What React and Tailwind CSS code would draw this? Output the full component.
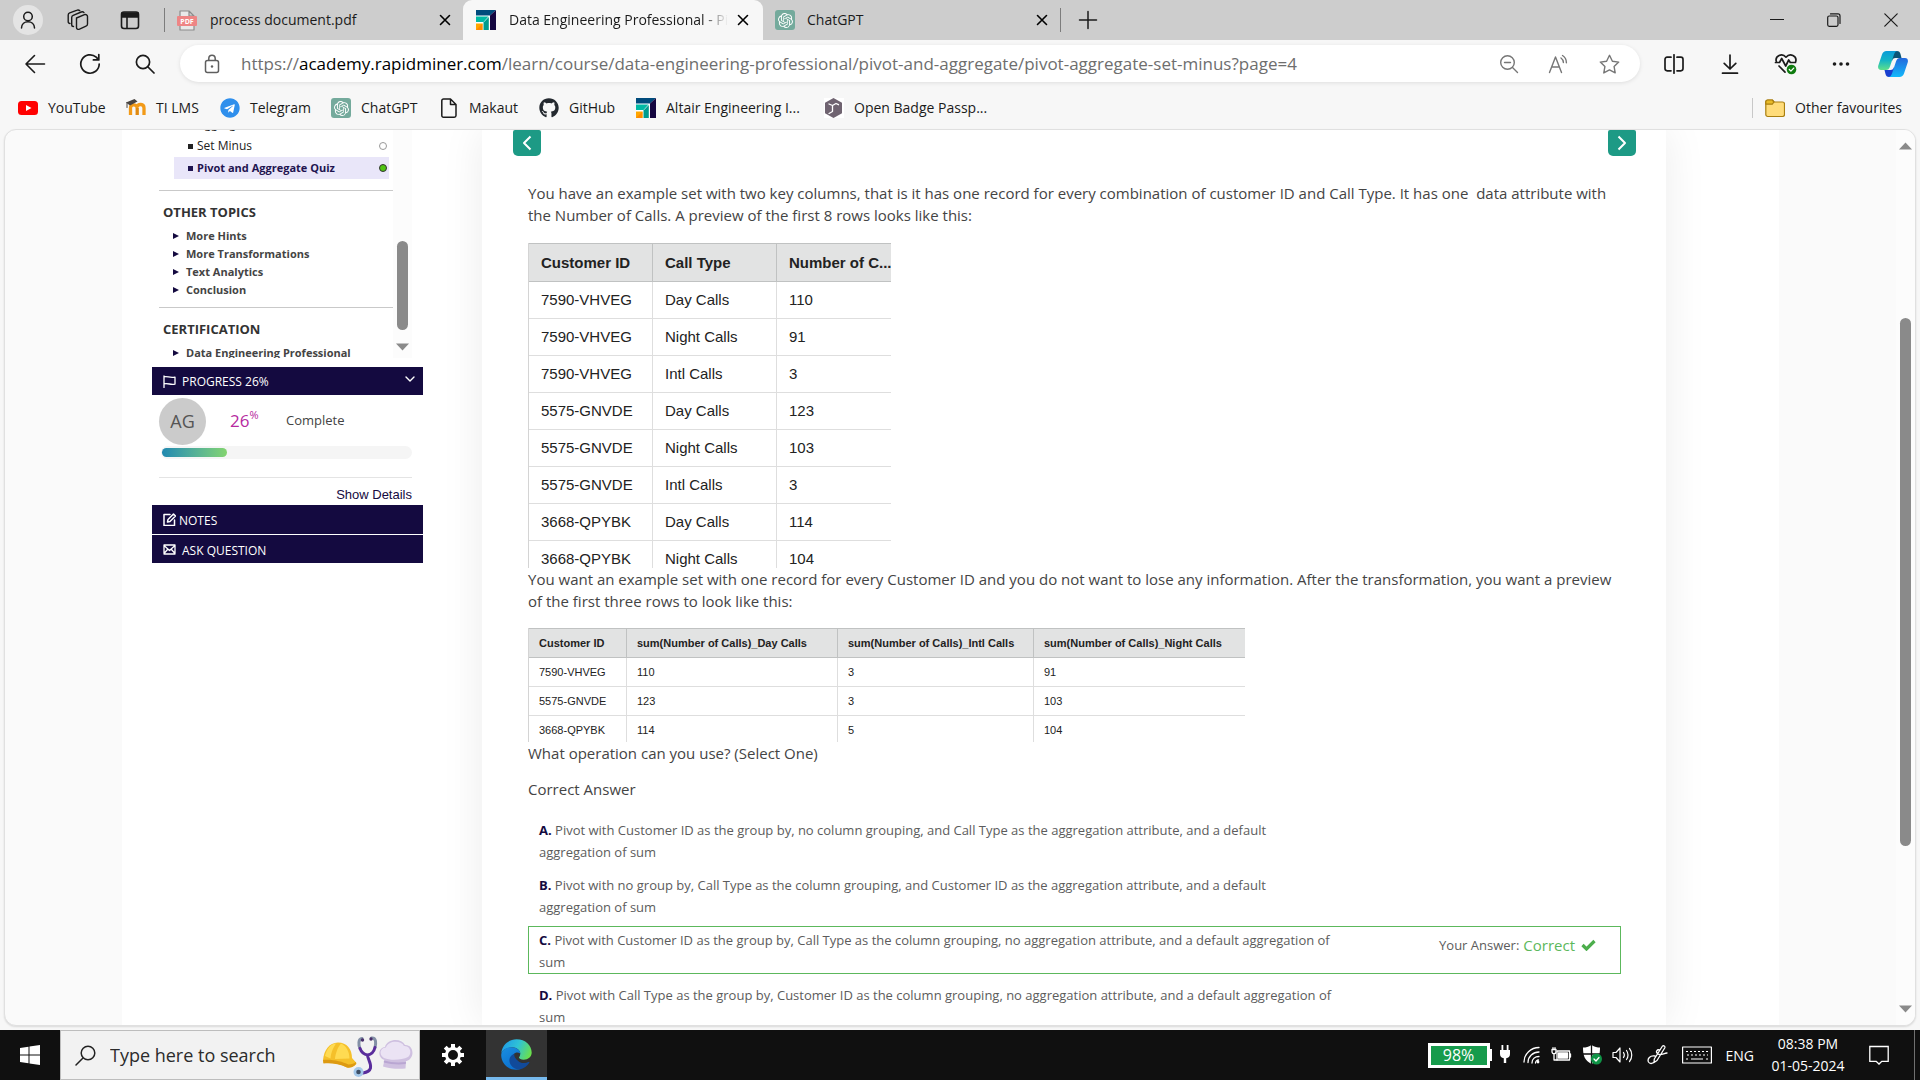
import React from "react";
import { FaGithub, FaTelegram } from "react-icons/fa";
import { SiOpenai } from "react-icons/si";

const UI = 'font-["Open_Sans","Noto_Sans",sans-serif]';

function Svg({ w = 20, h = 20, box, className = "", sw = 1.4, children }) {
  return (
    <svg
      width={w}
      height={h}
      viewBox={box || `0 0 ${w} ${h}`}
      fill="none"
      stroke="currentColor"
      strokeWidth={sw}
      strokeLinecap="round"
      strokeLinejoin="round"
      className={`shrink-0 ${className}`}
      aria-hidden="true"
    >
      {children}
    </svg>
  );
}

function AltairIcon() {
  return (
    <Svg className="" sw={0}>
      <rect width="20" height="20" fill="#fff" />
      <path d="M0 0h20l-6 5.500H0z" fill="#004b7c" />
      <path d="M20 0v20h-6V5.500z" fill="#140640" />
      <path d="M0 6.500h12.500l-5 5.500H0z" fill="#00b9a4" />
      <path d="M12.800 7v13H7.500v-7.500z" fill="#009b8c" />
      <path d="M0 13.500h6.500V20H0z" fill="#ffa600" />
      <path d="M6.500 13.500V20H0z" fill="#ff8a00" />
    </Svg>
  );
}

function ChatGptIcon() {
  return (
    <span className="flex size-5 shrink-0 items-center justify-center rounded-[3px] bg-[#74aa9c] text-white">
      <SiOpenai size={15} />
    </span>
  );
}

function PdfIcon() {
  return (
    <Svg w={20} h={21} sw={1.2}>
      <path d="M3 8V1h9l5 5v2M3 15v5h14v-5M12 1v5h5" fill="#e9e9e9" stroke="#8b8b8b" />
      <rect x="0" y="6" width="20" height="10" rx="1" fill="#ee8585" stroke="none" />
      <text x="10" y="13.500" textAnchor="middle" fontSize="7" fontWeight="700" fill="#fff" stroke="none" fontFamily="Open Sans">PDF</text>
    </Svg>
  );
}

function CloseX({ label = "Close tab" }) {
  return (
    <button type="button" aria-label={label} className="flex size-5 shrink-0 items-center justify-center text-black">
      <Svg w={12} h={12} sw={1.6}><path d="M1.500 1.500l9 9M10.500 1.500l-9 9" /></Svg>
    </button>
  );
}

function TabStrip() {
  return (
    <header className="flex h-10 shrink-0 items-center bg-[#cdcdcd] text-[14px] leading-5 text-[#1b1b1b]">
      <div className="flex w-[164px] shrink-0 items-center">
        <button type="button" aria-label="Profile" className="ml-[13px] flex size-[30px] items-center justify-center rounded-full bg-[#e4e4e4]">
          <Svg w={16} h={18} sw={1.5}><circle cx="8" cy="5.500" r="4.300" /><path d="M1.500 17c0-8.500 13-8.500 13 0" /></Svg>
        </button>
        <button type="button" aria-label="Workspaces" className="ml-6 flex size-[22px] items-center justify-center">
          <Svg w={22} h={22} sw={1.4}>
            <path d="M9.500 9l8-3.300c1.500-.6 3 .2 3 1.800v7.500c0 1-.5 1.800-1.500 2.200l-6.500 3c-1.500.6-3-.2-3-1.800z" />
            <path d="M6.500 17.500c-1 0-1.800-.8-1.800-1.800V8.500c0-1 .5-1.800 1.500-2.200l8-3.300c1.200-.5 2.300 0 2.800.6" />
            <path d="M3 14.500c-1 0-1.800-.8-1.800-1.800V6c0-1 .5-1.800 1.500-2.200l7.500-2.600c1.200-.5 2 0 2.500.4" />
          </Svg>
        </button>
        <button type="button" aria-label="Tab actions" className="ml-[31px] flex size-5 items-center justify-center">
          <Svg w={20} h={20} sw={1.600}>
            <rect x="1.500" y="2" width="17" height="16.500" rx="2.500" /><path d="M7 6v12" /><path d="M2 3h16v4H2z" fill="currentColor" />
          </Svg>
        </button>
      </div>
      <nav aria-label="Tabs" className="flex h-10 items-center">
        <div className="flex h-10 w-[299px] items-center">
          <div className="h-6 w-px bg-[#7c7c7c]" />
          <a href="#pdf" className="flex flex-1 items-center pl-3"><PdfIcon /><span className="ml-[13px]">process document.pdf</span></a>
          <CloseX />
          <span className="w-2" />
        </div>
        <div className="flex h-10 w-[300px] items-center rounded-t-[9px] bg-[#f7f7f7] pr-[10px] pl-[13px]">
          <a href="#course" className="flex min-w-0 flex-1 items-center">
            <AltairIcon />
            <span className="ml-[13px] w-[219px] overflow-hidden whitespace-nowrap [mask-image:linear-gradient(to_right,black_88%,transparent_100%)]">Data Engineering Professional - Pivot</span>
          </a>
          <CloseX />
        </div>
        <div className="flex h-10 w-[298px] items-center pl-3">
          <a href="#chatgpt" className="flex flex-1 items-center"><ChatGptIcon /><span className="ml-3">ChatGPT</span></a>
          <CloseX />
          <span className="w-2" />
          <div className="h-6 w-px bg-[#7c7c7c]" />
        </div>
        <button type="button" aria-label="New tab" className="ml-[17px] flex size-5 items-center justify-center">
          <Svg sw={1.5}><path d="M10 1.500v17M1.500 10h17" /></Svg>
        </button>
      </nav>
      <div className="ml-auto flex h-10 shrink-0 items-center gap-[37px] pr-[19px]">
        <button type="button" aria-label="Minimize" className="flex size-5 items-center justify-center"><Svg w={14} h={14} sw={1.2}><path d="M.5 6.500h13" /></Svg></button>
        <button type="button" aria-label="Restore" className="flex size-5 items-center justify-center">
          <Svg w={14} h={14} sw={1.2}><rect x=".7" y="3" width="10.300" height="10.300" rx="1.500" /><path d="M3.500.9h7.500c1.200 0 2 .8 2 2v7.600" /></Svg>
        </button>
        <button type="button" aria-label="Close window" className="flex size-5 items-center justify-center"><Svg w={14} h={14} sw={1.200}><path d="M.8.8l12.400 12.400M13.200.8L.8 13.200" /></Svg></button>
      </div>
    </header>
  );
}

function ToolButton({ label, children, className = "" }) {
  return (
    <button type="button" aria-label={label} className={`flex size-6 shrink-0 items-center justify-center ${className}`}>
      {children}
    </button>
  );
}

function Toolbar() {
  return (
    <div className="flex h-[47px] shrink-0 items-center pr-3 text-[#1b1b1b]">
      <div className="flex w-[180px] shrink-0 items-center gap-[31px] pl-[23px]">
        <ToolButton label="Back"><Svg w={22} h={20} sw={1.600}><path d="M20.500 10H2M10.500 1.500L2 10l8.500 8.500" /></Svg></ToolButton>
        <ToolButton label="Refresh"><Svg w={22} h={22} sw={1.700}><path d="M20.200 11a9.200 9.200 0 1 1-3-6.800l2.500 2.600M19.800 1.500v5.400h-5.400" /></Svg></ToolButton>
        <ToolButton label="Search"><Svg w={20} h={20} sw={1.700}><circle cx="8" cy="8" r="6.600" /><path d="M13 13l6 6" /></Svg></ToolButton>
      </div>
      <div className="flex h-[37px] min-w-0 flex-1 items-center rounded-full bg-white pr-[19px] pl-[22px] shadow-[0_1px_4px_rgba(0,0,0,0.10)]">
        <button type="button" aria-label="Site information" className="text-[#5f5f5f]">
          <Svg w={20} h={20} sw={1.500}><rect x="3.500" y="6.500" width="13" height="12" rx="2" /><path d="M6.800 6.300V4.600c0-4.600 6.400-4.600 6.400 0v1.700" /><circle cx="10" cy="12.500" r="1.200" fill="currentColor" stroke="none" /></Svg>
        </button>
        <div role="textbox" aria-label="Address" tabIndex={0} className="ml-[19px] min-w-0 flex-1 overflow-hidden text-[17px] leading-6 whitespace-nowrap text-[#6e6e6e]">
          https://<span className="text-black">academy.rapidminer.com</span>/learn/course/data-engineering-professional/pivot-and-aggregate/pivot-aggregate-set-minus?page=4
        </div>
        <div className="flex items-center gap-[26px] text-[#767676]">
          <ToolButton label="Zoom out"><Svg w={20} h={20} sw={1.400}><circle cx="8.500" cy="8.500" r="6.800" /><path d="M5.500 8.500h6M13.500 13.500l5 5" /></Svg></ToolButton>
          <ToolButton label="Read aloud"><Svg w={22} h={20} sw={1.400}><path d="M1.500 18.500L7.500 3l6 15.500M3.700 13h7.600M13 4c1.500 1 2.300 2.500 2.400 4.500M14.500 1.500c2.600 1.600 3.900 4.200 3.900 7.200" /></Svg></ToolButton>
          <ToolButton label="Add to favourites"><Svg w={21} h={20} sw={1.400}><path d="M10.500 1.300l2.900 5.900 6.300.9-4.600 4.500 1.100 6.300-5.700-3-5.700 3 1.100-6.300L1.300 8.100l6.300-.9z" /></Svg></ToolButton>
        </div>
      </div>
      <div className="ml-[22px] flex shrink-0 items-center">
        <ToolButton label="Split screen"><Svg w={20} h={20} sw={1.700}><path d="M10 .8v18.400M7 3.200H3.200c-1.300 0-2.200.9-2.200 2.200v9.200c0 1.300.9 2.200 2.200 2.200H7M13 3.200h3.800c1.300 0 2.200.9 2.200 2.200v9.200c0 1.300-.9 2.200-2.200 2.200H13" /></Svg></ToolButton>
        <ToolButton label="Downloads" className="ml-8"><Svg w={18} h={20} sw={1.700}><path d="M9 1v14M3.200 9.300L9 15l5.800-5.700M1.500 19.200h15" /></Svg></ToolButton>
        <ToolButton label="Browser essentials" className="ml-8">
          <Svg w={24} h={22} sw={1.700}>
            <path d="M2.300 8.500C.8 3 8-.8 12 4.200c4-5 11.200-1.200 9.700 4.300M1.500 9.500h4l2.200-4 4 7.500 3-6 1.600 2.500h5.200M5 13l6 6.200" />
            <circle cx="17.500" cy="16.500" r="4.800" fill="#107c10" stroke="none" /><path d="M15.300 16.500l1.600 1.600 2.800-3" stroke="#fff" strokeWidth="1.300" />
          </Svg>
        </ToolButton>
        <ToolButton label="Settings and more" className="ml-[31px]"><Svg w={18} h={6} sw={0}><g fill="currentColor"><circle cx="2.500" cy="3" r="1.800" /><circle cx="9" cy="3" r="1.800" /><circle cx="15.500" cy="3" r="1.800" /></g></Svg></ToolButton>
        <button type="button" aria-label="Copilot" className="ml-[25px]">
          <Svg w={30} h={28} sw={0}>
            <defs>
              <linearGradient id="cpa" x1="0" y1="0" x2="0" y2="1"><stop offset="0" stopColor="#0a9bd8" /><stop offset=".5" stopColor="#15b5c5" /><stop offset="1" stopColor="#5fe08a" /></linearGradient>
              <linearGradient id="cpb" x1="0" y1="0" x2="0" y2="1"><stop offset="0" stopColor="#2468dc" /><stop offset="1" stopColor="#13b9fb" /></linearGradient>
            </defs>
            <path d="M12 1h7c2 0 3 1.200 3.500 3l1 4h-6c-2 0-3 1-3.500 3z" fill="#0b5577" />
            <path d="M18 27h-7c-2 0-3-1.200-3.500-3l-1-4h6c2 0 3-1 3.500-3z" fill="#1a3fd0" />
            <path d="M8.500 1H20c-2 0-3.200 1-4 3.500l-4 12c-.8 2.400-2 3.500-4 3.500H3C.5 20-.4 18 .3 15.500L4 4.500C4.800 2.200 6.200 1 8.500 1z" fill="url(#cpa)" />
            <path d="M21.500 27H10c2 0 3.200-1 4-3.500l4-12C18.800 9 20 8 22 8h5c2.500 0 3.400 2 2.700 4.500L26 23.500c-.8 2.300-2.200 3.500-4.500 3.500z" fill="url(#cpb)" />
          </Svg>
        </button>
      </div>
    </div>
  );
}

const bookmarks = [
  {
    name: "YouTube", width: "w-[108px]",
    icon: <Svg sw={0}><rect x="0" y="3" width="20" height="14" rx="3.500" fill="#f00" /><path d="M8 7l5.500 3L8 13z" fill="#fff" /></Svg>,
  },
  {
    name: "TI LMS", width: "w-[94px]",
    icon: (
      <Svg sw={0}>
        <path d="M4.500 17V10c0-4 5-4 6.500-1 1-3.500 7-3.500 7 1v7" fill="none" stroke="#f29a18" strokeWidth="3.300" strokeLinecap="butt" />
        <path d="M11.200 17v-7" stroke="#e08a10" strokeWidth="3.300" strokeLinecap="butt" />
        <path d="M0 4.500L8.500 1l3 2.500L4 7.500z" fill="#4a4541" /><path d="M1 4.500v5" stroke="#4a4541" strokeWidth="1" />
      </Svg>
    ),
  },
  { name: "Telegram", width: "w-[111px]", icon: <span className="rounded-full bg-white"><FaTelegram size={20} color="#2f8fec" /></span> },
  { name: "ChatGPT", width: "w-[108px]", icon: <ChatGptIcon /> },
  { name: "Makaut", width: "w-[100px]", icon: <Svg sw={1.500}><path d="M4.500 1h7l5.500 5.500v11c0 1-.6 1.700-1.700 1.700H4.500c-1 0-1.700-.7-1.700-1.700V2.700C2.800 1.700 3.500 1 4.500 1zM11.500 1v5.500H17" /></Svg> },
  { name: "GitHub", width: "w-[97px]", icon: <FaGithub size={20} color="#24292f" /> },
  { name: "Altair Engineering I...", width: "w-[188px]", icon: <AltairIcon /> },
  {
    name: "Open Badge Passp...", width: "w-[170px]",
    icon: (
      <Svg sw={0}>
        <rect width="20" height="20" fill="#fff" />
        <path d="M9.500 0l8.500 4.800v10.400L9.500 20 1 15.200V4.800z" fill="#6f6370" />
        <path d="M5 15.500l3.500-2V7.500L5 6M8.500 7.500L12 5.500l2.500 1.200M8.500 13.500" fill="none" stroke="#fff" strokeWidth="1.300" />
      </Svg>
    ),
  },
];

function BookmarksBar() {
  return (
    <nav aria-label="Favourites" className="flex h-[42px] shrink-0 items-center pl-[18px] text-[14px] leading-5 text-[#1b1b1b]">
      {bookmarks.map((b) => (
        <a key={b.name} href="#favourite" className={`flex shrink-0 items-center gap-[10px] whitespace-nowrap ${b.width}`}>
          {b.icon}
          <span>{b.name}</span>
        </a>
      ))}
      <div className="ml-auto flex items-center gap-3 pr-[18px]">
        <div className="h-5 w-px bg-[#c8c8c8]" />
        <a href="#other" className="flex items-center gap-[10px] whitespace-nowrap">
          <Svg w={20} h={20} sw={1.200}>
            <path d="M.8 4c0-1.200.8-2 2-2h4.500L9 4h8.500c1.200 0 2 .8 2 2v10.500c0 1.200-.8 2-2 2H2.800c-1.200 0-2-.8-2-2z" fill="#ffdc7a" stroke="#a97f10" />
            <path d="M.8 4c0-1.200.8-2 2-2h4.500L9 4 7.300 6.200H.8z" fill="#e8bb28" stroke="#a97f10" />
          </Svg>
          <span>Other favourites</span>
        </a>
      </div>
    </nav>
  );
}

function Arrow({ up = false, className = "" }) {
  return (
    <Svg w={13} h={8} sw={0} className={className}>
      <path d={up ? "M0 7.500L6.500.5l6.500 7z" : "M0 .5h13l-6.500 7z"} fill="#8a8a8a" />
    </Svg>
  );
}

function TopicGroup({ title, items }) {
  return (
    <section className="h-[117px] shrink-0 border-t border-[#c9c9c9] pt-[10px]">
      <h2 className="pl-1 text-[13px] leading-[22px] font-bold text-[#333]">{title}</h2>
      <ul className="mt-1 pl-[14px]">
        {items.map((t) => (
          <li key={t}>
            <a href="#topic" className="flex items-center text-[11px] leading-[18px] font-bold whitespace-nowrap text-[#444]">
              <Svg w={6} h={6} sw={0} className="mr-[7px]"><path d="M0 0l6 3-6 3z" fill="#140a40" /></Svg>
              {t}
            </a>
          </li>
        ))}
      </ul>
    </section>
  );
}

function Sidebar() {
  return (
    <aside className="w-[360px] shrink-0 pl-[30px]">
      <div className="w-[271px]">
        <div className="flex h-[228px] overflow-hidden pl-[7px]">
          <div className="flex w-[234px] shrink-0 flex-col">
            <ul className="-mt-[17px] mb-[11px] ml-[15px] w-[215px] text-[12px] leading-[22px] text-[#222]">
              <li className="pl-[23px]">Aggregate</li>
              <li className="flex items-center pl-[14px]">
                <span className="mr-1 size-[5px] bg-[#222]" />
                <a href="#set-minus">Set Minus</a>
                <span className="mr-[2px] ml-auto size-2 rounded-full border border-[#999]" />
              </li>
              <li className="flex items-center bg-[#e9e6f9] pl-[14px] text-[11px] leading-[22px] font-bold text-[#1f1450]">
                <span className="mr-1 size-[5px] bg-[#1f1450]" />
                <a href="#quiz">Pivot and Aggregate Quiz</a>
                <span className="mr-[2px] ml-auto size-2 rounded-full border border-[#333] bg-[#4fc414]" />
              </li>
            </ul>
            <TopicGroup title="OTHER TOPICS" items={["More Hints", "More Transformations", "Text Analytics", "Conclusion"]} />
            <TopicGroup title="CERTIFICATION" items={["Data Engineering Professional"]} />
          </div>
          <div className="flex w-[19px] flex-col items-center bg-[#fcfcfc]">
            <div className="mt-[111px] h-[89px] w-[11px] shrink-0 rounded-full bg-[#8a8a8a]" />
            <Arrow className="mt-[13px]" />
          </div>
        </div>
        <button type="button" className="mt-[9px] flex h-7 w-full items-center bg-[#140a40] pr-2 pl-[11px] text-[12px] text-white">
          <Svg w={13} h={13} sw={1.300}><path d="M1 12.500V1M1 1.800c4-1 5 1.500 11 .3v7c-5 1.200-6-1.300-11-.3" /></Svg>
          <span className="ml-[6px] pt-[2px]">PROGRESS 26%</span>
          <Svg w={10} h={6} sw={1.400} className="-mt-1 ml-auto"><path d="M1 1l4 4 4-4" /></Svg>
        </button>
        <div className="pt-[2px] pr-[11px] pl-[7px]">
          <div className="flex h-12 items-center">
            <div className="flex size-[47px] items-center justify-center rounded-full bg-[#cbcbcb] text-[18px] text-[#555]">AG</div>
            <div className="ml-6 flex w-14 text-[17px] leading-6 text-[#b62aa0]">26<sup className="-top-[2px] self-start text-[11px] leading-4">%</sup></div>
            <div className="text-[13px] text-[#444]">Complete</div>
          </div>
          <div className="mt-px ml-[2px] rounded-full bg-[#f5f5f5] px-px py-[2px]" role="progressbar" aria-valuenow={26} aria-label="Course progress">
            <div className="h-[9px] w-[26%] rounded-full bg-linear-to-r from-[#2089b0] to-[#83d46e]" />
          </div>
          <div className="mt-[18px] flex justify-end border-t border-[#e4e4e4] pt-[7px]">
            <button type="button" className='font-["Liberation_Sans",Arial,sans-serif] text-[13px] leading-5 text-[#140a40]'>Show Details</button>
          </div>
        </div>
        <button type="button" className="flex h-[29px] w-full items-center bg-[#140a40] pl-[11px] text-[12px] text-white">
          <Svg w={13} h={13} sw={1.500}><path d="M7 1.500H1v11h10.500V7" /><path d="M4.500 9l.5-2.500L10.500 1l2 2L7 8.500z" fill="none" /></Svg>
          <span className="ml-[3px] pt-[2px]">NOTES</span>
        </button>
        <button type="button" className="mt-px flex h-7 w-full items-center bg-[#140a40] pl-[11px] text-[12px] text-white">
          <Svg w={13} h={11} sw={1.300}><path d="M1 1h11v9H1zM1 1.500l5.500 5 5.500-5M1 9.500l3.500-4M12 9.500l-3.500-4" /></Svg>
          <span className="ml-[6px] pt-[3px]">ASK QUESTION</span>
        </button>
      </div>
    </aside>
  );
}

const callRows = [
  ["7590-VHVEG", "Day Calls", "110"],
  ["7590-VHVEG", "Night Calls", "91"],
  ["7590-VHVEG", "Intl Calls", "3"],
  ["5575-GNVDE", "Day Calls", "123"],
  ["5575-GNVDE", "Night Calls", "103"],
  ["5575-GNVDE", "Intl Calls", "3"],
  ["3668-QPYBK", "Day Calls", "114"],
  ["3668-QPYBK", "Night Calls", "104"],
];

const pivotRows = [
  ["7590-VHVEG", "110", "3", "91"],
  ["5575-GNVDE", "123", "3", "103"],
  ["3668-QPYBK", "114", "5", "104"],
];

function CallsTable() {
  return (
    <div className="mt-[17px] h-[325px] w-[363px] overflow-hidden">
      <table className='w-full table-fixed border-separate border-spacing-0 border-l border-[#d4d4d4] font-["Liberation_Sans",Arial,sans-serif] text-[15px] leading-5 text-[#222]'>
        <colgroup><col className="w-[124px]" /><col className="w-[124px]" /><col /></colgroup>
        <thead>
          <tr className="h-[39px] bg-[#e2e3e3] text-left">
            {["Customer ID", "Call Type", "Number of C..."].map((h, i) => (
              <th key={h} className={`border-y border-[#c0c2c2] pl-3 whitespace-nowrap ${i < 2 ? "border-r" : ""}`}>{h}</th>
            ))}
          </tr>
        </thead>
        <tbody>
          {callRows.map((r) => (
            <tr key={r.join()} className="h-[37px]">
              {r.map((c, i) => (
                <td key={i} className={`border-b border-[#dedede] pl-3 ${i < 2 ? "border-r" : ""}`}>{c}</td>
              ))}
            </tr>
          ))}
        </tbody>
      </table>
    </div>
  );
}

function PivotTable() {
  return (
    <div className="mt-4 h-[114px] w-[717px] overflow-hidden">
      <table className='w-full table-fixed border-separate border-spacing-0 border-l border-[#d4d4d4] font-["Liberation_Sans",Arial,sans-serif] text-[11px] leading-4 text-[#222]'>
        <colgroup><col className="w-[98px]" /><col className="w-[211px]" /><col className="w-[196px]" /><col /></colgroup>
        <thead>
          <tr className="h-[30px] bg-[#e2e3e3] text-left">
            {["Customer ID", "sum(Number of Calls)_Day Calls", "sum(Number of Calls)_Intl Calls", "sum(Number of Calls)_Night Calls"].map((h, i) => (
              <th key={h} className={`border-y border-[#c0c2c2] pl-[10px] whitespace-nowrap ${i < 3 ? "border-r" : ""}`}>{h}</th>
            ))}
          </tr>
        </thead>
        <tbody>
          {pivotRows.map((r) => (
            <tr key={r[0]} className="h-[29px]">
              {r.map((c, i) => (
                <td key={i} className={`border-b border-[#dedede] pl-[10px] ${i < 3 ? "border-r" : ""}`}>{c}</td>
              ))}
            </tr>
          ))}
        </tbody>
      </table>
    </div>
  );
}

const answers = [
  { k: "A.", t: "Pivot with Customer ID as the group by, no column grouping, and Call Type as the aggregation attribute, and a default aggregation of sum" },
  { k: "B.", t: "Pivot with no group by, Call Type as the column grouping, and Customer ID as the aggregation attribute, and a default aggregation of sum" },
  { k: "C.", t: "Pivot with Customer ID as the group by, Call Type as the column grouping, no aggregation attribute, and a default aggregation of sum", correct: true },
  { k: "D.", t: "Pivot with Call Type as the group by, Customer ID as the column grouping, no aggregation attribute, and a default aggregation of sum" },
];

function Lesson() {
  return (
    <main className="mr-[113px] min-w-0 flex-1 bg-white pr-[30px] pl-[31px] text-[15px] leading-[22px] text-[#444] shadow-[0_0_40px_rgba(0,0,0,0.08)]">
      <div className="flex justify-between">
        <button type="button" aria-label="Previous" className="flex h-[26px] w-7 items-center justify-center rounded-t-[2px] rounded-b-[5px] bg-[#1d9a85] text-white">
          <Svg w={10} h={16} sw={2}><path d="M8.500 1.500L2 8l6.500 6.500" strokeLinecap="butt" /></Svg>
        </button>
        <button type="button" aria-label="Next" className="flex h-[26px] w-7 items-center justify-center rounded-t-[2px] rounded-b-[5px] bg-[#1d9a85] text-white">
          <Svg w={10} h={16} sw={2}><path d="M1.500 1.500L8 8l-6.500 6.500" strokeLinecap="butt" /></Svg>
        </button>
      </div>
      <div className="mr-[15px] ml-[15px]">
        <p className="mt-[26px]">
          You have an example set with two key columns, that is it has one record for every combination of customer ID and Call Type. It has one&nbsp; data attribute with the Number of Calls. A preview of the first 8 rows looks like this:
        </p>
        <CallsTable />
        <p>
          You want an example set with one record for every Customer ID and you do not want to lose any information. After the transformation, you want a preview of the first three rows to look like this:
        </p>
        <PivotTable />
        <p>What operation can you use? (Select One)</p>
        <p className="mt-[14px]">Correct Answer</p>
        <ol className="mt-4 flex flex-col gap-[7px] text-[13px] text-[#5c5c5c]">
          {answers.map((a) => (
            <li key={a.k} className={`flex border px-[10px] pt-[2px] ${a.correct ? "border-[#5cb85c]" : "border-transparent"}`}>
              <p className="max-w-[798px]"><b className="text-[#140a40]">{a.k}</b> {a.t}</p>
              {a.correct && (
                <p className="mt-[5px] mr-[14px] ml-auto flex items-center self-start whitespace-nowrap">
                  Your Answer:<span className="mr-[6px] ml-1 text-[15px] text-[#5cb85c]">Correct</span>
                  <Svg w={15} h={12} sw={3.200} className="text-[#4cae4c]"><path d="M1.500 6l4 4L13.500 2" strokeLinecap="butt" strokeLinejoin="miter" /></Svg>
                </p>
              )}
            </li>
          ))}
        </ol>
      </div>
    </main>
  );
}

function Helmet() {
  return (
    <Svg w={34} h={27} sw={0}>
      <path d="M0 18C1 8 6 1 15 .5 24 .5 29 7 29 16l4.500 5c0 2.500-5 4.500-9.500 4.500C17 21.500 9 21 .5 21z" fill="#f5c02a" />
      <path d="M2 14C4 6 8 2 13 1.500c-2 3-5 8-5.500 15zM12 17c.5-6 3-12 6-15.500 5 2 8.500 8 8.500 15z" fill="#ffdb52" />
      <path d="M0 18c9-1 19 1.500 25.500 4.500 3 0 6-1 7.500-2.500.8 3-4 6.500-9 5.500C16 21.500 8 21 .5 21.500z" fill="#dd9a12" />
    </Svg>
  );
}

function Stethoscope() {
  return (
    <Svg w={26} h={42} sw={3}>
      <path d="M9 2.500C5 3 5.500 9 7 12.500M18.500 2c5-.5 4.500 5.500 3.500 9.500" stroke="#8390a6" />
      <path d="M7 12.500c1.500 4 4.500 6 7.500 6.500 3.500-.5 6.500-3.500 7.500-7.500M14.500 19c0 4 4 8 3 13-.8 3-4 4.500-7.500 5" stroke="#5a2d9c" />
      <circle cx="5.500" cy="36" r="5" fill="#a4c8ea" stroke="none" /><circle cx="5.500" cy="36" r="2.300" fill="#3d4f66" stroke="none" />
      <circle cx="9.500" cy="4" r="1.700" fill="#49306b" stroke="none" /><circle cx="18" cy="3" r="1.700" fill="#49306b" stroke="none" />
    </Svg>
  );
}

function ChefHat() {
  return (
    <Svg w={34} h={30} sw={0}>
      <path d="M5.500 20C-1.500 18-1.500 8 6 7c2-8 16-9.500 20-2 7-.5 10 8.500 5 14-1.500 1.500-3 2-4 2l-.5 7.500c-7 .8-16 .3-22.500-2z" fill="#cfc0e0" />
      <path d="M5 18C-.5 15 1 8 7 7.500 9 .5 22 0 25 6c6-.5 8.500 7 4 11-6 3-17 4-24 1z" fill="#ebe3f4" />
      <path d="M5 20.500c7 2 14 2.500 22 1.500l-.3 2c-7 1-15.500.3-22-1.500z" fill="#b9a6d2" />
    </Svg>
  );
}

function EdgeLogo() {
  return (
    <Svg w={31} h={31} sw={0}>
      <defs>
        <linearGradient id="edg" x1="0" y1=".3" x2="1" y2=".6"><stop offset="0" stopColor="#1f9be6" /><stop offset=".5" stopColor="#2fc3d6" /><stop offset="1" stopColor="#6be04b" /></linearGradient>
        <linearGradient id="edb" x1="0" y1="0" x2=".6" y2="1"><stop offset="0" stopColor="#1a8fe0" /><stop offset="1" stopColor="#0b6fcf" /></linearGradient>
      </defs>
      <path d="M.3 14C1.200 6 7.500.3 15.500.3 24.500.3 30.700 6.500 30.700 13.500c0 4.500-3.700 7.200-8 7.200-3 0-5.200-1-4.700-2.500.4-1 1.300-1.800 1.300-3.700 0-3-3.500-6.200-8.300-6.200C6.500 8.300 2 10.500.3 14z" fill="url(#edg)" />
      <path d="M.2 16C.5 11 5.500 7.800 11 8.200c5 .3 8.300 3.300 8.300 6.300-4-2.500-8.300.5-8.300 5 0 5.500 4.500 9.500 9 10.300-1.500.6-3.200.9-5 .9C6.500 30.700.2 24 .2 16z" fill="url(#edb)" />
      <path d="M13.500 14.500c-3.500 1.500-5.500 4.500-5 8 .6 4.200 4.500 7.700 10 7.900 4.500-.8 7.800-3.300 9.800-6.600.4-.7-.2-1.100-.9-.8-3 1.400-7 1.300-9.600-.6-2.800-2-5.300-4.900-4.300-7.900z" fill="#114a9a" />
      <path d="M17.800 14.500c-3 .8-3.300 4-1 6.500 2.200 2.200 6 3.200 9.700 1.800 1.300-.6 2.500-1.300 3.300-2.800-1.800 1.300-4.300 1.700-7 1.500-3.500-.3-5.300-1.500-4.800-3.300.5-1.200 1.200-2.500-.2-3.700z" fill="#333" />
    </Svg>
  );
}

function Taskbar() {
  return (
    <footer className="flex h-[50px] shrink-0 items-center bg-[#101010] text-white">
      <button type="button" aria-label="Start" className="flex w-[60px] shrink-0 justify-center">
        <Svg w={20} h={20} sw={0}><path d="M0 3l8.500-1.200v7.700H0zM9.500 1.600L20 0v9.500H9.500zM0 10.500h8.500v7.700L0 17zM9.500 10.500H20V20L9.500 18.400z" fill="#fff" /></Svg>
      </button>
      <label className="flex h-full w-[360px] shrink-0 items-center overflow-hidden border border-[#bdbdbd] bg-[#f2f2f2] text-[#222]">
        <Svg w={21} h={21} sw={1.500} className="ml-[14px]"><circle cx="13" cy="8" r="6.800" /><path d="M8 13l-7 7" /></Svg>
        <input aria-label="Search" placeholder="Type here to search" className="ml-[14px] w-[213px] bg-transparent text-[18px] outline-none placeholder:text-[#2b2b2b]" />
        <Helmet /><span className="-ml-1 pt-1"><Stethoscope /></span><ChefHat />
      </label>
      <button type="button" aria-label="Settings" className="flex w-[66px] shrink-0 justify-center">
        <Svg w={24} h={24} sw={3}>
          <circle cx="12" cy="12" r="6.500" />
          <path strokeWidth="4" strokeLinecap="butt" d="M12 5V1M12 19v4M5 12H1M19 12h4M7 7L4.200 4.200M17 17l2.800 2.800M17 7l2.800-2.800M7 17l-2.800 2.800" />
        </Svg>
      </button>
      <button type="button" aria-label="Microsoft Edge" className="flex h-full w-[61px] shrink-0 items-center justify-center border-b-[3px] border-[#76b9ed] bg-[#333] pt-[2px]"><EdgeLogo /></button>
      <div className="ml-auto flex h-full shrink-0 items-center">
        <div className="flex items-center">
          <div className="flex h-[25px] w-[62px] items-center justify-center border-[3px] border-white bg-[#169b4c] text-[16px] leading-none">98%</div>
          <div className="h-3 w-[2px] bg-white" />
        </div>
        <Svg w={12} h={20} sw={0} className="ml-[7px]"><path d="M2.500 0h1.800v5h3.400V0h1.800v5H11v4c0 2.500-1.500 4-3.800 4.300V18H4.800v-4.700C2.500 13 1 11.500 1 9V5h1.500z" fill="#fff" /></Svg>
        <Svg w={17} h={18} sw={1.300} className="ml-3"><path d="M1 16C1 8 8 1.500 16 1.500M5 16.500c0-6 5-10.500 11-10.500M9 17c0-4 3-6.500 7-6.500M12.500 17c0-1.500 1.500-3 3-3" /><circle cx="15" cy="16" r="1.400" fill="currentColor" stroke="none" /></Svg>
        <Svg w={21} h={16} sw={1.300} className="ml-[11px]"><path d="M6 4h12.500v9H6zM19.500 7v3" /><path d="M7.500 6h9v5h-9z" fill="currentColor" /><path d="M1 2.500h4v2c0 3-4 3-4 0zM2 .7v1.500M4 .7v1.500M3 7v6h3" /></Svg>
        <Svg w={20} h={20} sw={0} className="ml-[10px]">
          <path d="M9.500 0c3 2 6 2.500 8.500 2.500 0 8-1.500 13-8.500 16.500C2.500 15.500 1 10.500 1 2.500 4 2.500 6.500 2 9.500 0z" fill="#fff" />
          <path d="M9.500 0v19M0 9h19" stroke="#101010" strokeWidth="1.300" />
          <circle cx="14.500" cy="14" r="5.500" fill="#0f9446" /><path d="M12 14l2 2 3-3.500" stroke="#fff" strokeWidth="1.300" fill="none" />
        </Svg>
        <Svg w={21} h={18} sw={1.200} className="ml-[10px]"><path d="M1 6.500h3L8 2v14l-4-4.500H1zM11.500 6.500c1 1.500 1 3.500 0 5M14.500 4.500c2 2.500 2 6.500 0 9M17.500 2.500c3 3.500 3 9.500 0 13" /></Svg>
        <Svg w={21} h={20} sw={1.300} className="ml-[14px]"><path d="M15.500 1c1.500-.8 3 .5 2.200 2L10 15.500l-3 2 .3-3.500zM13 5c-3-1-5 2-2 4s6-1 9-1M8 11c-5-1-8 3-6.500 6 1.500 2.500 5 1.500 6-.5" /></Svg>
        <Svg w={30} h={18} sw={1.200} className="ml-[14px]"><rect x=".6" y="1" width="28.800" height="16" /><path strokeDasharray="2 2" strokeLinecap="butt" d="M4 5.500h22M5 9h21" /><path d="M4 13h2M9 13h12M24 13h2" strokeLinecap="butt" /></Svg>
        <span className="ml-[14px] text-[14px]">ENG</span>
        <div className="ml-[14px] w-[80px] text-center text-[14px] leading-[22px]"><time className="block">08:38 PM</time><time className="block whitespace-nowrap">01-05-2024</time></div>
        <button type="button" aria-label="Notifications" className="ml-[21px]"><Svg w={20} h={20} sw={1.300}><path d="M.8 1.500h18.400v14.800h-6.400L10 19l-2.800-2.700H.8z" strokeLinejoin="miter" /></Svg></button>
        <div className="ml-[25px] h-full w-[6px] border-l border-[#707070]" />
      </div>
    </footer>
  );
}

export default function App() {
  return (
    <div className={`flex h-screen w-full flex-col overflow-hidden bg-[#f7f7f7] ${UI}`}>
      <TabStrip />
      <Toolbar />
      <BookmarksBar />
      <div className="mx-1 mb-1 flex min-h-0 flex-1 overflow-hidden rounded-xl border border-[#e0e0e0] bg-[#fafafa] shadow-[0_1px_2px_rgba(0,0,0,0.12)]">
        <div className="mx-[117px] flex min-w-0 flex-1 overflow-hidden bg-white">
          <Sidebar />
          <Lesson />
        </div>
        <div className="flex w-[19px] shrink-0 flex-col items-center bg-[#fcfcfc] pt-3 pb-3">
          <Arrow up />
          <div className="mt-[168px] h-[528px] w-[11px] rounded-full bg-[#8a8a8a]" />
          <Arrow className="mt-auto" />
        </div>
      </div>
      <Taskbar />
    </div>
  );
}
